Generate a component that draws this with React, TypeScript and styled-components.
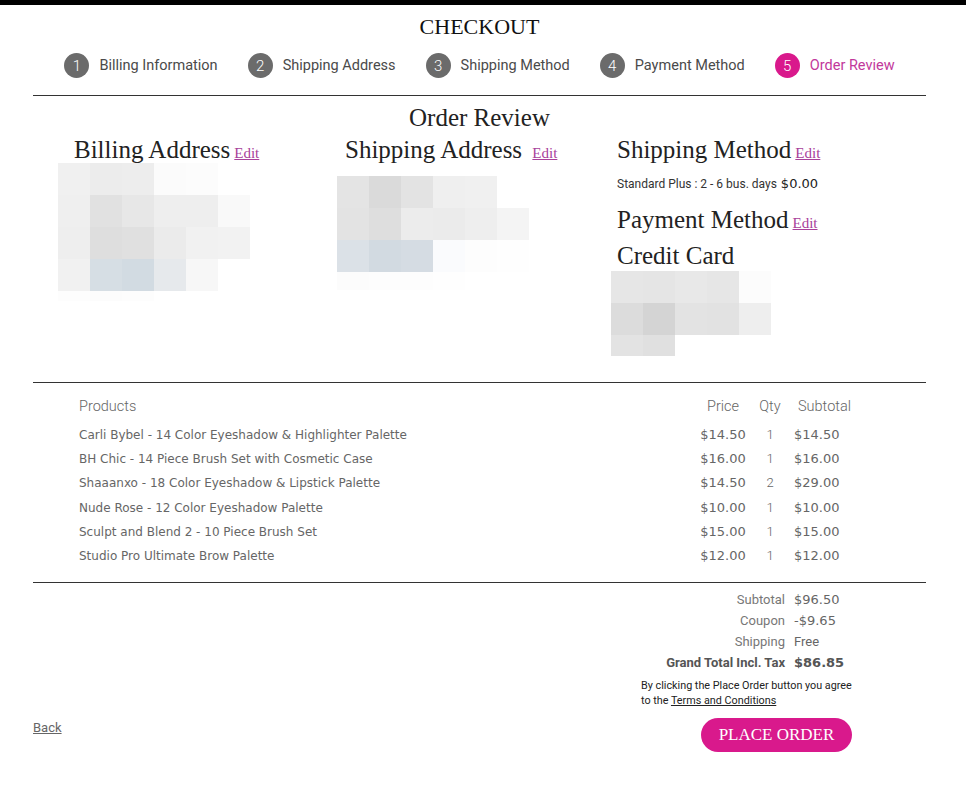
import React from "react";
import styled, { createGlobalStyle } from "styled-components";

const GlobalStyle = createGlobalStyle`
  html, body { margin: 0; padding: 0; background: #fff; }
  body { font-family: Roboto, "Liberation Sans", sans-serif; color: #333; }
  * { box-sizing: border-box; }
`;

const serif = `"Liberation Serif", "Times New Roman", serif`;
const verdana = `"DejaVu Sans", Verdana, sans-serif`;

const TopBar = styled.div`
  height: 5px;
  background: #000;
`;

const Container = styled.div`
  padding: 0 40px 0 33px;
`;

const Title = styled.h1`
  margin: 9px 0 0;
  font: 400 22px/26px ${serif};
  text-align: center;
  color: #111;
`;

const Steps = styled.ol`
  list-style: none;
  margin: 13px 0 0;
  padding: 0;
  display: flex;
  justify-content: center;
  gap: 30px;
  height: 25px;
`;

const Step = styled.li<{ $active?: boolean }>`
  display: flex;
  align-items: center;
  gap: 10px;
  font-size: 14.5px;
  color: ${(p) => (p.$active ? "#c2389b" : "#4a4a4a")};
  white-space: nowrap;
`;

const StepNum = styled.span<{ $active?: boolean }>`
  width: 25px;
  height: 25px;
  border-radius: 50%;
  background: ${(p) => (p.$active ? "#d9198c" : "#6b6b6b")};
  color: #fff;
  display: flex;
  align-items: center;
  justify-content: center;
  font-size: 15px;
  font-weight: 300;
`;

const Rule = styled.hr<{ $top?: number }>`
  margin: ${(p) => p.$top ?? 0}px 0 0;
  border: 0;
  border-top: 1px solid #333;
  height: 0;
`;

const SectionTitle = styled.h2`
  margin: 8px 0 0;
  font: 400 25px/28px ${serif};
  text-align: center;
  color: #222;
`;

const Columns = styled.div`
  display: grid;
  grid-template-columns: 279px 274px 1fr;
  margin-top: 4px;
  padding: 0 0 26px 25px;
  align-items: start;
`;

const Column = styled.div`
  display: flex;
  flex-direction: column;
  align-items: flex-start;
`;

const Heading = styled.h3<{ $indent: number; $top?: number }>`
  margin: ${(p) => p.$top ?? 0}px 0 0;
  padding-left: ${(p) => p.$indent}px;
  font: 400 25px/27px ${serif};
  color: #222;
  white-space: nowrap;
`;

const Edit = styled.a`
  margin-left: 4px;
  font: 400 15px ${serif};
  color: #a8409a;
  text-decoration: underline;
  cursor: pointer;
`;

const ShipText = styled.div`
  margin-top: 12px;
  padding-left: 6px;
  font-size: 12px;
  line-height: 18px;
  color: #333;
  white-space: nowrap;
`;

const Price = styled.span`
  margin-left: 4px;
  font-family: ${verdana};
  font-size: 13px;
  color: #222;
`;

const MosaicSvg = styled.svg<{ $top?: number }>`
  display: block;
  margin-top: ${(p) => p.$top ?? 0}px;
`;

type MRow = { h: number; c: (string | null)[] };

const Mosaic: React.FC<{ rows: MRow[]; top?: number }> = ({ rows, top }) => {
  const cols = Math.max(...rows.map((r) => r.c.length));
  const height = rows.reduce((s, r) => s + r.h, 0);
  let y = 0;
  return (
    <MosaicSvg $top={top} width={cols * 32} height={height} viewBox={`0 0 ${cols * 32} ${height}`}>
      {rows.map((r, ri) => {
        const y0 = y;
        y += r.h;
        return r.c.map((col, ci) =>
          col ? <rect key={`${ri}-${ci}`} x={ci * 32} y={y0} width={32} height={r.h} fill={col} /> : null
        );
      })}
    </MosaicSvg>
  );
};

const billingRows: MRow[] = [
  { h: 32, c: ["#f0f0f0", "#ececec", "#ededed", "#fbfbfb", "#fcfcfc", null] },
  { h: 32, c: ["#efefef", "#e1e1e1", "#e7e7e7", "#eeeeee", "#eeeeee", "#f9f9f9"] },
  { h: 32, c: ["#eeeeee", "#dedede", "#e0e0e0", "#ebebeb", "#f1f1f1", "#f2f2f2"] },
  { h: 32, c: ["#f1f1f1", "#d6dee4", "#d2dbe2", "#e6e9ec", "#f7f7f7", null] },
  { h: 10, c: ["#fdfdfd", "#fcfcfc", "#fdfdfd", null, null, null] },
];

const shippingRows: MRow[] = [
  { h: 32, c: ["#e4e4e4", "#dadada", "#e3e3e3", "#efefef", "#f0f0f0", null] },
  { h: 32, c: ["#e3e3e3", "#dedede", "#ececec", "#ebebeb", "#eeeeee", "#f4f4f4"] },
  { h: 32, c: ["#dbe1e7", "#d2dae1", "#d5dce3", "#fafbfd", "#fdfdfd", "#fefefe"] },
  { h: 18, c: ["#fcfcfc", "#fdfdfd", "#fdfdfd", "#fefefe", null, null] },
];

const cardRows: MRow[] = [
  { h: 32, c: ["#e6e6e6", "#e5e5e5", "#e8e8e8", "#e6e6e6", "#fcfcfc"] },
  { h: 32, c: ["#dcdcdc", "#d4d4d4", "#e3e3e3", "#e2e2e2", "#eeeeee"] },
  { h: 21, c: ["#e3e3e3", "#e0e0e0", null, null, null] },
];

const Table = styled.div`
  padding: 14px 66px 14px 46px;
`;

const TRow = styled.div<{ $head?: boolean }>`
  display: grid;
  grid-template-columns: 615px 58px 36px 1fr;
  align-items: center;
  line-height: ${(p) => (p.$head ? "20px" : "24.2px")};
  margin-bottom: ${(p) => (p.$head ? "6px" : "0")};
  color: #666;
  font-family: ${(p) => (p.$head ? "Roboto, sans-serif" : verdana)};
  font-size: ${(p) => (p.$head ? "14.5px" : "12px")};
  font-weight: ${(p) => (p.$head ? 300 : 400)};
  white-space: nowrap;
`;

const Cell = styled.span<{ $align?: "left" | "center"; $pad?: number; $size?: number; $roboto?: boolean }>`
  text-align: ${(p) => p.$align ?? "left"};
  padding-left: ${(p) => p.$pad ?? 0}px;
  ${(p) => (p.$size ? `font-size: ${p.$size}px;` : "")}
  ${(p) => (p.$roboto ? `font-family: Roboto, sans-serif; font-weight: 300;` : "")}
`;

const Footer = styled.div`
  display: flex;
  justify-content: space-between;
  align-items: flex-end;
`;

const Back = styled.a`
  margin-bottom: 16px;
  font-size: 13px;
  line-height: 16px;
  color: #666;
  text-decoration: underline;
  cursor: pointer;
`;

const Summary = styled.div`
  width: 211px;
  margin-right: 74px;
  padding-top: 5.5px;
  display: flex;
  flex-direction: column;
`;

const Totals = styled.div`
  display: grid;
  grid-template-columns: 1fr 58px;
  column-gap: 9px;
  line-height: 21px;
  white-space: nowrap;
`;

const TLabel = styled.span<{ $strong?: boolean }>`
  text-align: right;
  font-family: Roboto, sans-serif;
  font-size: 13px;
  font-weight: ${(p) => (p.$strong ? 700 : 400)};
  color: ${(p) => (p.$strong ? "#555" : "#777")};
`;

const TValue = styled.span<{ $strong?: boolean; $roboto?: boolean }>`
  font-family: ${(p) => (p.$roboto ? "Roboto, sans-serif" : verdana)};
  font-size: 13px;
  font-weight: ${(p) => (p.$strong ? 700 : 400)};
  color: ${(p) => (p.$strong ? "#555" : "#666")};
`;

const Terms = styled.p`
  margin: 5px 0 0;
  font-size: 10.8px;
  line-height: 15px;
  color: #222;
  white-space: nowrap;
  a {
    color: #222;
    text-decoration: underline;
  }
`;

const PlaceOrder = styled.button`
  align-self: flex-end;
  margin-top: 10.5px;
  width: 151px;
  height: 34px;
  border: 0;
  border-radius: 17px;
  background: #d9198c;
  color: #fff;
  font: 400 17px ${serif};
  cursor: pointer;
`;

const steps = ["Billing Information", "Shipping Address", "Shipping Method", "Payment Method", "Order Review"];

const products = [
  ["Carli Bybel - 14 Color Eyeshadow & Highlighter Palette", "$14.50", "1", "$14.50"],
  ["BH Chic - 14 Piece Brush Set with Cosmetic Case", "$16.00", "1", "$16.00"],
  ["Shaaanxo - 18 Color Eyeshadow & Lipstick Palette", "$14.50", "2", "$29.00"],
  ["Nude Rose - 12 Color Eyeshadow Palette", "$10.00", "1", "$10.00"],
  ["Sculpt and Blend 2 - 10 Piece Brush Set", "$15.00", "1", "$15.00"],
  ["Studio Pro Ultimate Brow Palette", "$12.00", "1", "$12.00"],
];

export default function App() {
  return (
    <>
      <GlobalStyle />
      <TopBar />
      <Container>
        <Title>CHECKOUT</Title>
        <Steps>
          {steps.map((s, i) => (
            <Step key={s} $active={i === 4}>
              <StepNum $active={i === 4}>{i + 1}</StepNum>
              {s}
            </Step>
          ))}
        </Steps>
        <Rule $top={17} />
        <SectionTitle>Order Review</SectionTitle>
        <Columns>
          <Column>
            <Heading $indent={16}>
              Billing Address<Edit>Edit</Edit>
            </Heading>
            <Mosaic rows={billingRows} />
          </Column>
          <Column>
            <Heading $indent={8}>
              Shipping Address <Edit>Edit</Edit>
            </Heading>
            <Mosaic rows={shippingRows} top={13} />
          </Column>
          <Column>
            <Heading $indent={6}>
              Shipping Method<Edit>Edit</Edit>
            </Heading>
            <ShipText>
              Standard Plus : 2 - 6 bus. days<Price>$0.00</Price>
            </ShipText>
            <Heading $indent={6} $top={13}>
              Payment Method<Edit>Edit</Edit>
            </Heading>
            <Heading $indent={6} $top={9}>
              Credit Card
            </Heading>
            <Mosaic rows={cardRows} top={2} />
          </Column>
        </Columns>
        <Rule />
        <Table>
          <TRow $head>
            <Cell>Products</Cell>
            <Cell $align="center">Price</Cell>
            <Cell $align="center">Qty</Cell>
            <Cell $pad={10}>Subtotal</Cell>
          </TRow>
          {products.map(([name, price, qty, sub]) => (
            <TRow key={name}>
              <Cell>{name}</Cell>
              <Cell $align="center" $size={13}>{price}</Cell>
              <Cell $align="center" $size={13} $roboto>{qty}</Cell>
              <Cell $pad={6} $size={13}>{sub}</Cell>
            </TRow>
          ))}
        </Table>
        <Rule />
        <Footer>
          <Back>Back</Back>
          <Summary>
            <Totals>
              <TLabel>Subtotal</TLabel>
              <TValue>$96.50</TValue>
              <TLabel>Coupon</TLabel>
              <TValue>-$9.65</TValue>
              <TLabel>Shipping</TLabel>
              <TValue $roboto>Free</TValue>
              <TLabel $strong>Grand Total Incl. Tax</TLabel>
              <TValue $strong>$86.85</TValue>
            </Totals>
            <Terms>
              By clicking the Place Order button you agree
              <br />
              to the <a>Terms and Conditions</a>
            </Terms>
            <PlaceOrder>PLACE ORDER</PlaceOrder>
          </Summary>
        </Footer>
      </Container>
    </>
  );
}
